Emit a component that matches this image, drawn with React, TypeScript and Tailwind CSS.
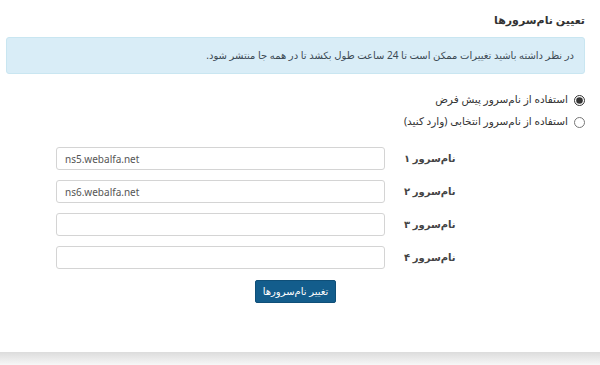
import { useState } from 'react';

const NAMESERVERS = [
    { label: 'نام‌سرور ۱', value: 'ns5.webalfa.net' },
    { label: 'نام‌سرور ۲', value: 'ns6.webalfa.net' },
    { label: 'نام‌سرور ۳', value: '' },
    { label: 'نام‌سرور ۴', value: '' },
];

export default function App() {
    const [mode, setMode] = useState<'default' | 'custom'>('default');

    return (
        <div
            dir="rtl"
            className="w-[600px] h-[365px] bg-white flex flex-col text-[#333]"
            style={{ fontFamily: '"Noto Sans", "DejaVu Sans", sans-serif' }}
        >
            <div className="h-[352px] pr-[15px] pl-[6px] pt-[11px]">
                <h2 className="text-[11px] font-bold leading-[18px] text-[#333]">تعیین نام‌سرورها</h2>

                <div className="mt-[8px] h-[37px] flex items-center px-[10px] bg-[#d9edf7] border border-[#c9e6f1] rounded-[3px] text-[10px] text-[#3c4a54]">
                    در نظر داشته باشید تغییرات ممکن است تا 24 ساعت طول بکشد تا در همه جا منتشر شود.
                </div>

                <div className="mt-[18px] flex flex-col gap-[6px] text-[10.5px]">
                    <label className="flex items-center gap-[6px] h-[16px] cursor-pointer">
                        <input
                            type="radio"
                            name="ns-mode"
                            checked={mode === 'default'}
                            onChange={() => setMode('default')}
                            className="w-[11px] h-[11px] m-0 accent-[#333]"
                        />
                        استفاده از نام‌سرور پیش فرض
                    </label>
                    <label className="flex items-center gap-[6px] h-[16px] cursor-pointer">
                        <input
                            type="radio"
                            name="ns-mode"
                            checked={mode === 'custom'}
                            onChange={() => setMode('custom')}
                            className="w-[11px] h-[11px] m-0 accent-[#333]"
                        />
                        استفاده از نام‌سرور انتخابی (وارد کنید)
                    </label>
                </div>

                <div className="mt-[17px] flex flex-col gap-[10px]">
                    {NAMESERVERS.map((ns) => (
                        <div key={ns.label} className="flex items-center">
                            <div className="w-[185px] text-left pl-[4px] text-[10px] font-bold text-[#444]">
                                {ns.label}
                            </div>
                            <input
                                dir="ltr"
                                defaultValue={ns.value}
                                className="mr-[15px] w-[329px] h-[23px] px-[8px] text-[10px] text-[#555] border border-[#d4d4d4] rounded-[3px] bg-white outline-none"
                            />
                        </div>
                    ))}
                </div>

                <div className="mt-[11px] flex justify-center">
                    <button className="h-[23px] px-[7px] bg-[#135d8c] border border-[#0f4f78] rounded-[2px] text-white text-[10px]">
                        تغییر نام‌سرورها
                    </button>
                </div>
            </div>
            <div className="flex-1 bg-gradient-to-b from-[#dcdcdc] to-[#f7f7f7]" />
        </div>
    );
}
